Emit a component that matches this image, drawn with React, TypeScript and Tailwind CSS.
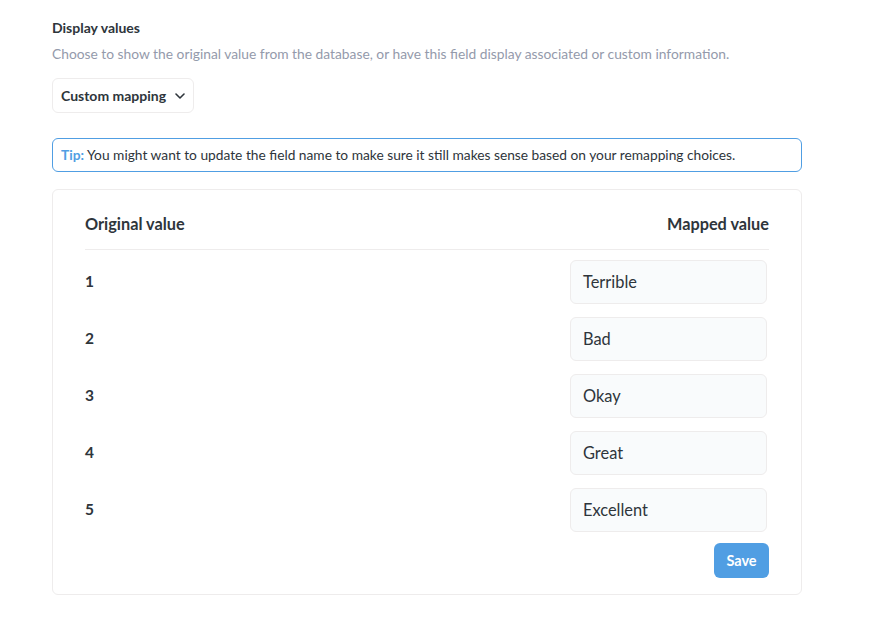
import React from "react";

const rows = [
  { k: "1", v: "Terrible" },
  { k: "2", v: "Bad" },
  { k: "3", v: "Okay" },
  { k: "4", v: "Great" },
  { k: "5", v: "Excellent" },
];

export default function App() {
  return (
    <div
      className="w-[872px] h-[618px] bg-white text-[#2e353b]"
      style={{ fontFamily: "Lato, 'Noto Sans', sans-serif" }}
    >
      <div className="pl-[52px] pt-[19px] w-[802px]">
        <div className="text-[14px] font-bold leading-[18px]">Display values</div>
        <div className="mt-[7px] text-[13.8px] leading-[20px] text-[#949aab]">
          Choose to show the original value from the database, or have this field display associated or custom information.
        </div>
        <div className="mt-[14px] inline-flex items-center h-[35px] px-[8px] border border-[#eeecec] rounded-[6px] text-[14px] font-bold">
          <span>Custom mapping</span>
          <svg className="ml-[9px]" width="10" height="10" viewBox="0 0 10 10" fill="none">
            <path d="M1 3l4 4 4-4" stroke="#2e353b" strokeWidth="1.6" strokeLinecap="round" strokeLinejoin="round" />
          </svg>
        </div>
        <div className="mt-[25px] h-[34px] flex items-center px-[8px] border border-[#509ee3] rounded-[6px] text-[13.75px]">
          <span className="font-bold text-[#509ee3]">Tip:</span>
          <span className="ml-[3px]">You might want to update the field name to make sure it still makes sense based on your remapping choices.</span>
        </div>
        <div className="mt-[17px] border border-[#eeecec] rounded-[6px] px-[32px] pt-[24px] pb-[16px]">
          <div className="flex justify-between text-[16.3px] font-bold leading-[20px] pb-[15px] border-b border-[#eeecec]">
            <span>Original value</span>
            <span>Mapped value</span>
          </div>
          <div className="mt-[10px] flex flex-col gap-[13px]">
            {rows.map((r) => (
              <div key={r.k} className="flex items-center justify-between">
                <span className="text-[15.5px] font-bold">{r.k}</span>
                <div className="w-[197px] mr-[2px] h-[44px] flex items-center px-[12px] bg-[#f9fbfc] border border-[#eeecec] rounded-[6px] text-[16.4px]">
                  {r.v}
                </div>
              </div>
            ))}
          </div>
          <div className="mt-[11px] flex justify-end">
            <button className="h-[35px] w-[55px] rounded-[6px] bg-[#509ee3] text-white text-[14.5px] font-bold">
              Save
            </button>
          </div>
        </div>
      </div>
    </div>
  );
}
